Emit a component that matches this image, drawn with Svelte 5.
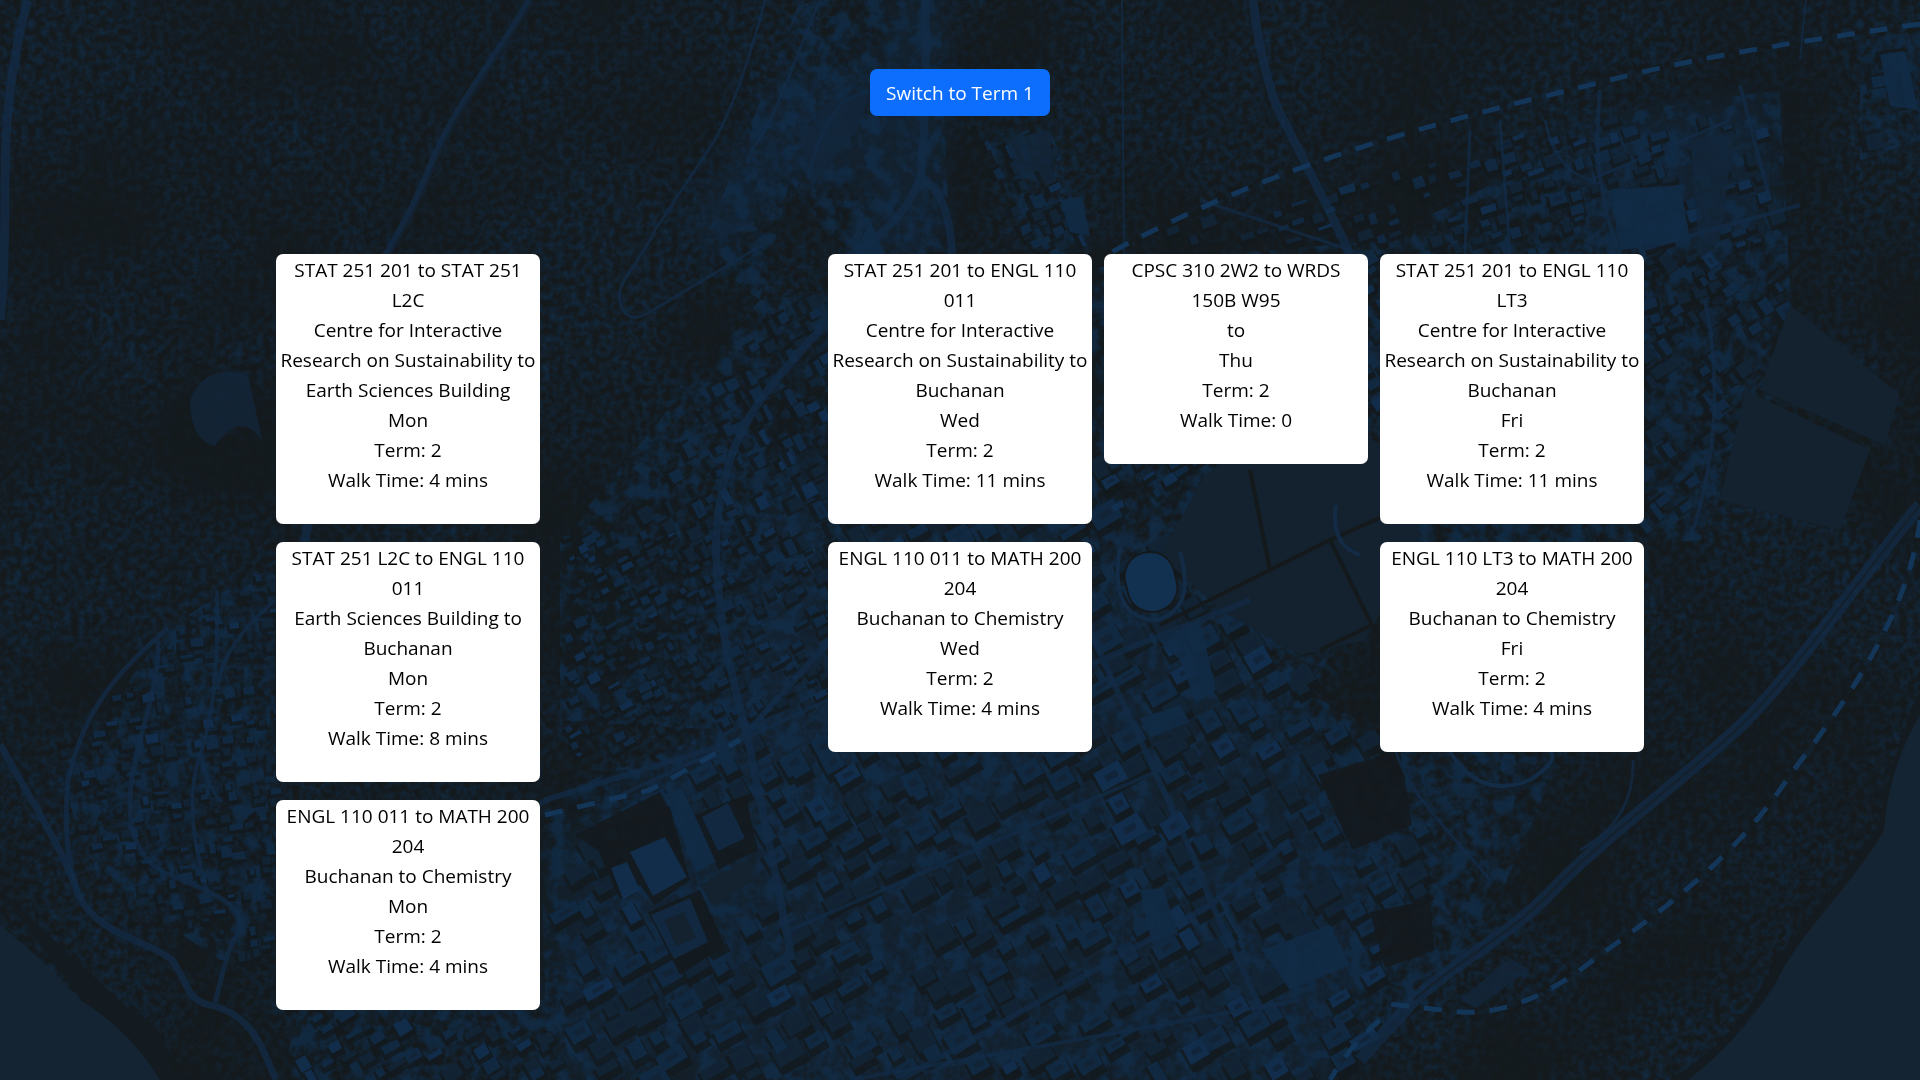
<script>
  const terms = {
    2: [
      [
        { from: 'STAT 251 201', to: 'STAT 251 L2C', start: 'Centre for Interactive Research on Sustainability', end: 'Earth Sciences Building', day: 'Mon', walk: '4 mins' },
        { from: 'STAT 251 L2C', to: 'ENGL 110 011', start: 'Earth Sciences Building', end: 'Buchanan', day: 'Mon', walk: '8 mins' },
        { from: 'ENGL 110 011', to: 'MATH 200 204', start: 'Buchanan', end: 'Chemistry', day: 'Mon', walk: '4 mins' }
      ],
      [],
      [
        { from: 'STAT 251 201', to: 'ENGL 110 011', start: 'Centre for Interactive Research on Sustainability', end: 'Buchanan', day: 'Wed', walk: '11 mins' },
        { from: 'ENGL 110 011', to: 'MATH 200 204', start: 'Buchanan', end: 'Chemistry', day: 'Wed', walk: '4 mins' }
      ],
      [
        { from: 'CPSC 310 2W2', to: 'WRDS 150B W95', start: '', end: '', day: 'Thu', walk: '0' }
      ],
      [
        { from: 'STAT 251 201', to: 'ENGL 110 LT3', start: 'Centre for Interactive Research on Sustainability', end: 'Buchanan', day: 'Fri', walk: '11 mins' },
        { from: 'ENGL 110 LT3', to: 'MATH 200 204', start: 'Buchanan', end: 'Chemistry', day: 'Fri', walk: '4 mins' }
      ]
    ],
    1: [[], [], [], [], []]
  };

  let term = $state(2);
  const days = $derived(terms[term]);
  const other = $derived(term === 2 ? 1 : 2);

  // Seeded generator, so the aerial map is the same on every visit.
  function seeded(seed) {
    let s = seed;
    return () => {
      s = (s + 0x6d2b79f5) | 0;
      let t = Math.imul(s ^ (s >>> 15), 1 | s);
      t = (t + Math.imul(t ^ (t >>> 7), 61 | t)) ^ t;
      return ((t ^ (t >>> 14)) >>> 0) / 4294967296;
    };
  }

  function inside(x, y, poly) {
    let hit = false;
    for (let i = 0, j = poly.length - 1; i < poly.length; j = i++) {
      const [xi, yi] = poly[i];
      const [xj, yj] = poly[j];
      if (yi > y !== yj > y && x < ((xj - xi) * (y - yi)) / (yj - yi) + xi) hit = !hit;
    }
    return hit;
  }

  // Fills a district with blocks laid out on a rotated street grid.
  function district({ poly, angle, cell, seed, density, skip = [] }) {
    const rnd = seeded(seed);
    const a = (angle * Math.PI) / 180;
    const c = Math.cos(a);
    const s = Math.sin(a);
    const paths = { low: '', mid: '', high: '', dark: '', roof: '' };
    const cx = poly.reduce((n, p) => n + p[0], 0) / poly.length;
    const cy = poly.reduce((n, p) => n + p[1], 0) / poly.length;
    for (let u = -900; u < 900; u += cell) {
      for (let v = -900; v < 900; v += cell * 0.8) {
        const ju = u + (rnd() - 0.5) * cell * 0.5;
        const jv = v + (rnd() - 0.5) * cell * 0.4;
        const w = cell * (0.35 + rnd() * 0.6);
        const h = cell * (0.2 + rnd() * 0.5);
        const kind = rnd();
        const on = rnd() < density;
        const x = cx + ju * c - jv * s;
        const y = cy + ju * s + jv * c;
        if (!on || !inside(x, y, poly) || skip.some((p) => inside(x, y, p))) continue;
        const box = (du, dv, bw, bh) => {
          const pts = [[du, dv], [du + bw, dv], [du + bw, dv + bh], [du, dv + bh]];
          return 'M' + pts.map(([p, q]) => `${Math.round(x + p * c - q * s)} ${Math.round(y + p * s + q * c)}`).join('L') + 'Z';
        };
        paths.dark += box(-3, 1, w + 4, h + cell * 0.22);
        paths[kind < 0.45 ? 'low' : kind < 0.88 ? 'mid' : 'high'] += box(0, 0, w, h);
        if (w > 16 && h > 9) paths.roof += box(w * 0.3, h * 0.35, w * 0.45, h * 0.3);
      }
    }
    return paths;
  }

  const fields = [
    [[1200, 450], [1320, 405], [1420, 470], [1420, 560], [1365, 640], [1300, 650], [1215, 600], [1150, 500]],
    [[1320, 770], [1400, 750], [1412, 830], [1350, 850], [1300, 800]],
    [[605, 845], [675, 800], [740, 800], [770, 890], [700, 945], [660, 960]],
    [[1370, 910], [1430, 900], [1435, 950], [1385, 970]],
    [[1250, 945], [1340, 920], [1360, 970], [1280, 1000]]
  ];

  const districts = [
    { poly: [[800, 520], [1090, 460], [1300, 690], [1420, 780], [1430, 880], [1330, 1080], [560, 1080], [540, 850], [620, 790], [800, 720]], angle: -30, cell: 32, seed: 7, density: 0.78, skip: fields },
    { poly: [[560, 530], [740, 520], [820, 540], [820, 700], [740, 720], [560, 760]], angle: -28, cell: 14, seed: 21, density: 0.5 },
    { poly: [[740, 330], [830, 270], [850, 540], [700, 560], [560, 540], [660, 490]], angle: 62, cell: 19, seed: 11, density: 0.6 },
    { poly: [[1090, 470], [1370, 250], [1400, 400], [1200, 450], [1150, 520]], angle: -32, cell: 17, seed: 5, density: 0.5 },
    { poly: [[1150, 225], [1330, 190], [1560, 120], [1770, 90], [1780, 240], [1720, 270], [1640, 420], [1640, 255], [1130, 250]], angle: -18, cell: 18, seed: 15, density: 0.5 },
    { poly: [[1640, 250], [1770, 250], [1790, 300], [1740, 420], [1690, 530], [1640, 530]], angle: 55, cell: 22, seed: 29, density: 0.5 },
    { poly: [[985, 140], [1050, 130], [1090, 250], [1030, 255]], angle: 65, cell: 18, seed: 3, density: 0.8 },
    { poly: [[85, 720], [165, 630], [275, 560], [275, 960], [220, 960], [130, 880], [75, 850]], angle: -8, cell: 14, seed: 31, density: 0.42 },
    { poly: [[280, 1015], [560, 1015], [560, 1080], [300, 1080]], angle: -30, cell: 20, seed: 41, density: 0.55 },
    { poly: [[1880, 40], [1920, 30], [1920, 130], [1860, 150]], angle: 80, cell: 24, seed: 12, density: 0.7 }
  ].map(district);

  const roads = [
    ['M28 0Q5 80 5 180T0 320', 9],
    ['M530 0C495 62 455 105 431 166S395 235 384 262', 8],
    ['M308 524Q303 545 305 560', 9],
    ['M925 0Q928 90 921 175C905 225 865 245 830 268M922 178Q950 195 952 254', 8],
    ['M820 0C790 70 775 120 752 150M765 0Q742 90 715 140L655 230C640 265 615 280 620 302Q626 326 650 312L762 245', 3],
    ['M808 178Q820 125 845 100L868 91', 3],
    ['M1253 0Q1260 60 1276 105C1298 150 1320 190 1350 254', 9],
    ['M1122 0L1124 254M1806 0L1800 60', 2],
    ['M820 330C755 400 722 440 716 540C716 625 736 690 748 740Q765 820 792 960', 8],
    ['M1090 460L880 585L740 740L545 800', 6],
    ['M0 744C30 800 62 845 78 895C98 935 148 940 172 960C190 985 185 1002 215 1006C258 1020 264 1055 276 1080', 7],
    ['M168 628C120 670 85 705 68 780Q62 850 78 892M158 640C160 700 128 750 130 810C135 875 170 872 210 892Q245 910 240 930C225 950 222 980 215 1002', 5],
    ['M217 590C218 680 212 720 200 755C188 790 190 830 206 888M201 756Q208 790 222 802M218 690Q218 650 275 600', 4],
    ['M1920 505C1850 590 1790 680 1736 730S1600 840 1555 888S1450 965 1414 1000L1360 1060', 13],
    ['M1633 760Q1635 820 1580 850M1490 880C1450 830 1400 790 1390 730', 3],
    ['M1080 610C1130 720 1180 820 1210 900L1262 1010M1000 700L1250 600M900 1080L1210 905L1290 840', 6],
    ['M610 800L850 690M790 930L1160 770M850 1080L1300 1000', 4],
    ['M1600 90Q1590 180 1620 254M1740 85L1770 200M1640 250L1800 205M1705 300Q1730 420 1690 540', 4],
    ['M1200 200L1350 250M1470 130L1465 254M1500 120L1510 254M1545 120Q1555 170 1590 180L1730 120', 3]
  ];

  const dashes = [
    'M1920 24C1830 37 1710 54 1610 80C1470 115 1290 155 1110 253',
    'M1920 520C1908 620 1838 712 1790 775C1730 868 1640 925 1580 970Q1510 1020 1450 1011L1390 1004',
    'M1380 1020Q1350 1045 1330 1080',
    'M545 815L650 790L740 740'
  ];
</script>

<svg class="map" viewBox="0 0 1920 1080" preserveAspectRatio="xMidYMid slice" aria-hidden="true">
  <defs>
    <filter id="grain" x="0" y="0" width="100%" height="100%" color-interpolation-filters="sRGB">
      <feTurbulence type="fractalNoise" baseFrequency="0.14" numOctaves="3" seed="4" />
      <feColorMatrix values="0 0 0 0 0.07  0 0 0 0 0.155  0 0 0 0 0.235  2.2 0 0 0 -0.75" />
    </filter>
    <filter id="patches" x="0" y="0" width="100%" height="100%" color-interpolation-filters="sRGB">
      <feTurbulence type="fractalNoise" baseFrequency="0.006" numOctaves="4" seed="9" />
      <feColorMatrix values="0 0 0 0 0.08  0 0 0 0 0.1  0 0 0 0 0.11  3 0 0 0 -1.2" />
    </filter>
    <filter id="trees" x="0" y="0" width="100%" height="100%" color-interpolation-filters="sRGB">
      <feTurbulence type="fractalNoise" baseFrequency="0.06" numOctaves="4" seed="17" />
      <feColorMatrix values="0 0 0 0 0.07  0 0 0 0 0.18  0 0 0 0 0.29  4 0 0 0 -1.7" />
    </filter>
    <filter id="soft" x="0" y="0" width="100%" height="100%" filterUnits="userSpaceOnUse" color-interpolation-filters="sRGB"><feGaussianBlur stdDeviation="0.7" /></filter>
    <filter id="haze" x="-20%" y="-20%" width="140%" height="140%" color-interpolation-filters="sRGB"><feGaussianBlur stdDeviation="14" /></filter>
    <clipPath id="town">
      <path d="M760 300L1380 240L1640 110L1780 90L1790 290L1700 540L1420 560L1300 690L1400 740L1560 760L1480 940L1330 1080H280L300 1010L545 1000L540 800L720 730L560 720V540ZM60 780L165 630L275 560V960H220L100 880ZM1860 40L1920 30V140L1860 160ZM985 135L1050 128L1092 254H1030ZM800 0H940L950 254H840L790 180L760 300L700 254Z" />
    </clipPath>
  </defs>

  <rect class="ground" width="1920" height="1080" />
  <rect width="1920" height="1080" filter="url(#grain)" />
  <rect width="1920" height="1080" filter="url(#patches)" opacity="0.8" />

  <g class="glow" filter="url(#haze)">
    <path d="M780 450L1000 480L1280 700L1400 880L1330 1080H560L550 850L720 730Z" />
    <path d="M1560 130L1770 90L1780 240L1620 260Z" />
    <path d="M890 0H950L940 254H860Z" />
    <path d="M780 80L880 60L860 190L790 180L720 254L680 230Z" />
  </g>

  <g clip-path="url(#town)" opacity="0.75">
    <rect width="1920" height="1080" filter="url(#trees)" />
  </g>

  <g filter="url(#soft)">
    {#each districts as d}
      <path class="dark" d={d.dark} />
      <path class="low" d={d.low} />
      <path class="mid" d={d.mid} />
      <path class="high" d={d.high} />
      <path class="roof" d={d.roof} />
    {/each}

    <path class="field" d="M1160 555L1205 475L1320 405L1410 465L1420 545L1365 640L1300 655L1220 610ZM1790 305L1900 395L1885 445L1760 390ZM1745 390L1870 450L1840 530L1720 500Z" />
    <path class="seam" d="M1160 625L1270 570L1250 470M1270 570L1330 540L1372 625L1320 650M1330 540L1420 500" />
    <path class="low" d="M800 140L830 100L870 90L858 130L812 182ZM710 212L735 226L760 215L720 240ZM1690 140L1735 130L1720 240L1700 260ZM1005 140L1050 130L1052 165L1020 178Z" />
    <path class="mid" d="M870 220L885 254H855ZM1060 200L1082 196L1090 236L1070 232ZM1880 55L1906 52L1918 110L1890 106ZM1610 190L1680 185L1690 240L1620 250Z" />
    <path class="mid" d="M1158 640L1200 620L1216 690L1196 704L1180 660ZM1140 718L1180 705L1190 722L1150 738Z" />
    <rect class="lawn" x="1126" y="552" width="50" height="60" rx="24" transform="rotate(-14 1151 582)" />
    <path class="ring" d="M1336 505Q1330 545 1360 555M1120 548Q1108 620 1158 620Q1196 608 1180 552M1450 752Q1480 800 1530 780Q1560 760 1550 752" />
    <path class="low" d="M190 400Q205 362 248 375L262 440Q240 410 215 446Q190 440 190 400ZM1510 958L1530 970L1476 1008L1460 1000Z" />

    <path class="shade" d="M575 835L660 792L672 815L690 880L655 905L640 885L620 900L598 850ZM695 815L745 795L758 850L718 870ZM648 912L700 890L725 945L680 975ZM1318 775L1400 750L1412 825L1352 850ZM1370 912L1430 900L1434 950L1385 968Z" />
    <path class="high" d="M630 852L665 837L687 877L653 896ZM611 868L627 862L640 890L623 899Z" />
    <path class="mid" d="M651 915L690 898L708 942L674 959ZM702 817L728 803L745 838L718 851ZM664 794L682 788L716 862L696 872ZM1140 890L1163 888L1178 932L1152 944ZM1262 950L1330 925L1350 965L1290 990Z" />
    <path class="field" d="M700 885L748 860L755 880L712 905ZM664 920L684 912L696 938L676 946Z" />

    {#each roads as [d, w]}
      <path class="road" {d} stroke-width={w} />
    {/each}
    <path class="lane" d="M1920 505C1850 590 1790 680 1736 730S1600 840 1555 888S1450 965 1414 1000M533 0C498 62 458 105 434 166S398 235 387 262" />
  </g>

  <g filter="url(#soft)">
    <path class="shore" d="M1920 690Q1890 760 1880 820C1850 880 1790 930 1762 985Q1735 1040 1670 1080H1700L1920 800ZM0 890Q70 955 130 1010Q175 1030 170 1080H140Z" />
    <path class="water" d="M1920 715Q1888 770 1884 830C1850 890 1800 930 1775 985Q1740 1040 1688 1080H1920ZM0 925Q50 965 80 1000Q130 1030 160 1080H0Z" />
  </g>

  {#each dashes as d}
    <path class="dash" {d} />
  {/each}
</svg>

<main>
  <button type="button" onclick={() => (term = other)}>Switch to Term {other}</button>

  <div class="week">
    {#each days as walks}
      <div class="day">
        {#each walks as walk}
          <article>
            <p>{walk.from} to {walk.to}</p>
            <p>{walk.start} to {walk.end}</p>
            <p>{walk.day}</p>
            <p>Term: {term}</p>
            <p>Walk Time: {walk.walk}</p>
          </article>
        {/each}
      </div>
    {/each}
  </div>
</main>

<style>
  :global(body) {
    margin: 0;
    background: #14202b;
    font-family: 'Segoe UI', 'Open Sans', 'Noto Sans', sans-serif;
    font-size: 19px;
    line-height: 30px;
    color: #000;
  }

  .map {
    position: fixed;
    inset: 0;
    z-index: -1;
    width: 100%;
    height: 100%;
  }

  .ground { fill: #14191c; }
  .glow { fill: #132b45; opacity: 0.4; }
  .dark { fill: #13191d; opacity: 0.8; }
  .low { fill: #13263a; opacity: 0.8; }
  .mid { fill: #122b46; opacity: 0.85; }
  .high { fill: #123050; opacity: 0.9; }
  .roof { fill: #132234; opacity: 0.8; }
  .shade { fill: #14191c; opacity: 0.85; }
  .field { fill: #14222f; }
  .seam { fill: none; stroke: #14191c; stroke-width: 4; }
  .lawn { fill: #123050; stroke: #14191c; stroke-width: 2; }
  .ring { fill: none; stroke: #132b45; stroke-width: 4; }
  .road { fill: none; stroke: #132b45; opacity: 0.75; }
  .lane { fill: none; stroke: #14202b; stroke-width: 2; }
  .shore { fill: #141b20; }
  .water { fill: #152433; }
  .dash { fill: none; stroke: #133558; stroke-width: 5; stroke-dasharray: 18 15; }

  main {
    display: flex;
    flex-direction: column;
    align-items: center;
    gap: 138px;
    padding: 69px 276px;
  }

  button {
    padding: 9px 16px 8px;
    border: 0;
    border-radius: 7px;
    background: #0d6efd;
    color: #fff;
    font: inherit;
    cursor: pointer;
  }

  .week {
    display: grid;
    grid-template-columns: repeat(5, minmax(0, 1fr));
    gap: 12px;
    width: 100%;
  }

  .day {
    display: flex;
    flex-direction: column;
    gap: 18px;
  }

  article {
    padding: 1px 4px 29px;
    border-radius: 7px;
    background: #fff;
    text-align: center;
  }

  p {
    margin: 0;
  }

  @media (max-width: 1500px) {
    main { padding: 48px 24px; gap: 72px; }
    .week { grid-template-columns: repeat(auto-fit, minmax(240px, 1fr)); }
  }
</style>
